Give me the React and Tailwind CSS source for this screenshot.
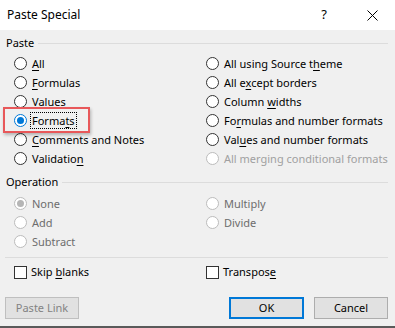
import React from "react";

const font = { fontFamily: '"Noto Sans", "Segoe UI", sans-serif' };

function Radio({ children, checked, disabled, dim, focus }) {
  const ring = disabled
    ? "border-[#bcbcbc]"
    : checked
      ? "border-[#0078d7]"
      : "border-[#333333]";
  const text = disabled
    ? dim
      ? "text-[#a0a0a0]"
      : "text-[#6d6d6d]"
    : "text-black";
  return (
    <div className="flex h-[19px] items-center">
      <span
        className={`flex h-[13px] w-[13px] shrink-0 items-center justify-center rounded-full border bg-white ${ring}`}
      >
        {checked && (
          <span
            className={`h-[7px] w-[7px] rounded-full ${disabled ? "bg-[#b5b5b5]" : "bg-[#0078d7]"}`}
          />
        )}
      </span>
      <span
        className={`ml-[3px] whitespace-nowrap px-[1px] leading-[15px] ${text} ${focus ? "border border-dotted border-black" : "border border-transparent"}`}
      >
        {children}
      </span>
    </div>
  );
}

function Check({ children }) {
  return (
    <div className="flex h-[19px] items-center">
      <span className="h-[13px] w-[13px] shrink-0 border border-[#333333] bg-white" />
      <span className="ml-[4px] whitespace-nowrap">{children}</span>
    </div>
  );
}

function GroupLabel({ title }) {
  return (
    <div className="flex h-[16px] items-center pl-[6px] pr-[7px]">
      <span className="whitespace-nowrap">{title}</span>
      <span className="ml-[4px] h-px flex-1 bg-[#dcdcdc]" />
    </div>
  );
}

const U = ({ children }) => (
  <span className="underline underline-offset-[2px]">{children}</span>
);

export default function App() {
  return (
    <div
      className="relative flex h-[328px] w-[395px] flex-col overflow-hidden border-b-2 border-[#5a5a5a] bg-[#f0f0f0] text-[11px] text-black"
      style={font}
    >
      <div className="flex h-[30px] shrink-0 items-center bg-white pl-[7px] text-[12px]">
        <span className="flex-1">Paste Special</span>
        <span className="w-[10px] text-center text-[13px]">?</span>
        <span className="ml-[37px] mr-[17px] flex h-[12px] w-[12px] items-center justify-center">
          <svg width="11" height="11" viewBox="0 0 11 11">
            <path d="M0.5 0.5 L10.5 10.5 M10.5 0.5 L0.5 10.5" stroke="#000" strokeWidth="1" />
          </svg>
        </span>
      </div>

      <div className="mt-[5px]">
        <GroupLabel title="Paste" />
      </div>
      <div className="mt-[3px] grid grid-cols-[192px_1fr] pl-[14px]">
        <div className="flex flex-col">
          <Radio>
            <U>A</U>ll
          </Radio>
          <Radio>
            <U>F</U>ormulas
          </Radio>
          <Radio>Values</Radio>
          <Radio checked focus>
            Forma<U>t</U>s
          </Radio>
          <Radio>
            <U>C</U>omments and Notes
          </Radio>
          <Radio>
            Validatio<U>n</U>
          </Radio>
        </div>
        <div className="flex flex-col">
          <Radio>
            All using Source t<U>h</U>eme
          </Radio>
          <Radio>
            All e<U>x</U>cept borders
          </Radio>
          <Radio>
            Column <U>w</U>idths
          </Radio>
          <Radio>
            Fo<U>r</U>mulas and number formats
          </Radio>
          <Radio>
            Val<U>u</U>es and number formats
          </Radio>
          <Radio disabled dim>
            All merging conditional formats
          </Radio>
        </div>
      </div>

      <div className="mt-[6px]">
        <GroupLabel title="Operation" />
      </div>
      <div className="mt-[4px] grid grid-cols-[192px_1fr] pl-[14px]">
        <div className="flex flex-col">
          <Radio checked disabled>
            None
          </Radio>
          <Radio disabled>Add</Radio>
          <Radio disabled>Subtract</Radio>
        </div>
        <div className="flex flex-col">
          <Radio disabled>Multiply</Radio>
          <Radio disabled>Divide</Radio>
        </div>
      </div>

      <div className="mx-[5px] mr-[7px] mt-[6px] h-px bg-[#dcdcdc]" />

      <div className="mt-[5px] grid grid-cols-[192px_1fr] pl-[14px]">
        <Check>
          Skip <U>b</U>lanks
        </Check>
        <Check>
          Transpos<U>e</U>
        </Check>
      </div>

      <div className="mt-[15px] flex h-[22px] items-stretch px-[5px]">
        <button className="w-[74px] border border-[#bfbfbf] bg-[#e1e1e1] text-[#838383]">
          Paste Link
        </button>
        <div className="flex-1" />
        <button className="w-[75px] border-2 border-[#0078d7] bg-[#e1e1e1]">
          OK
        </button>
        <button className="ml-[10px] mr-[2px] w-[74px] border border-[#adadad] bg-[#e1e1e1]">
          Cancel
        </button>
      </div>

      <div className="pointer-events-none absolute left-[3px] top-[107px] h-[26px] w-[87px] border-2 border-[#e8585a] shadow-[1px_2px_3px_rgba(0,0,0,0.25)]" />
    </div>
  );
}
